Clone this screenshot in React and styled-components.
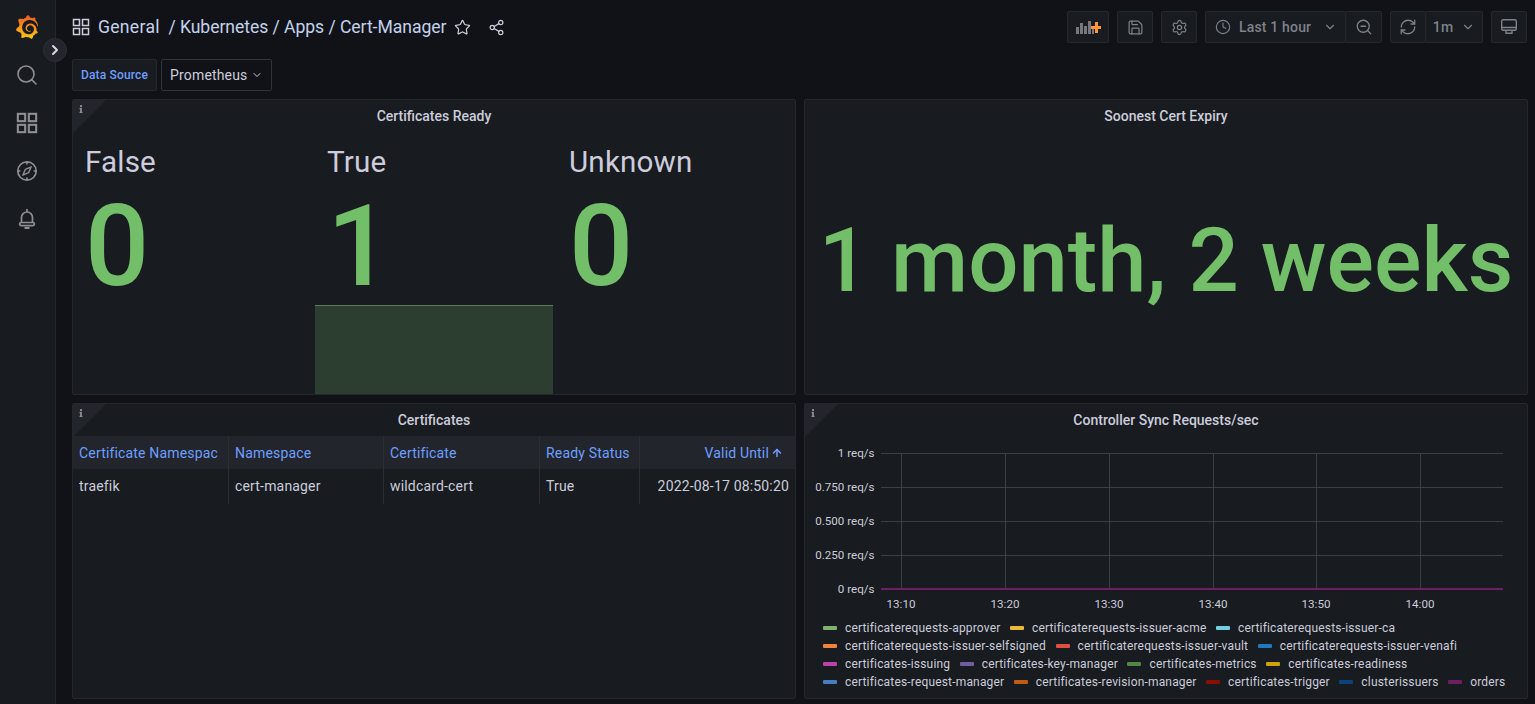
import React from 'react';
import styled, { createGlobalStyle } from 'styled-components';
import { Search, Star, Share2, Save, Settings, Clock, ZoomOut, RefreshCw, ChevronDown, ChevronRight, ArrowUp } from 'lucide-react';
import { SiGrafana } from 'react-icons/si';
import { FaInfo } from 'react-icons/fa';

const GlobalStyle = createGlobalStyle`
  html, body {
    margin: 0;
    height: 100%;
    overflow: hidden;
    background: #111217;
  }
  body {
    font-family: Roboto, "Liberation Sans", sans-serif;
    letter-spacing: 0.01071em;
    color: #ccccdc;
  }
  * {
    box-sizing: border-box;
  }
`;

const Page = styled.div`
  display: flex;
  position: relative;
  width: 1535px;
  height: 704px;
  overflow: hidden;
`;

const Sidebar = styled.nav`
  width: 56px;
  flex: none;
  background: #181b1f;
  border-right: 1px solid #25272c;
  display: flex;
  flex-direction: column;
  align-items: center;
  padding: 15px 1px 0 0;
  color: #8e8e96;
`;

const Logo = styled.div`
  height: 24px;
  margin-bottom: 12px;
  svg {
    fill: url(#grafanaGradient);
  }
`;

const SideItem = styled.div`
  height: 48px;
  display: flex;
  align-items: center;
  justify-content: center;
  width: 100%;
`;

const ExpandButton = styled.button`
  position: absolute;
  left: 43px;
  top: 38px;
  width: 24px;
  height: 24px;
  padding: 0;
  border-radius: 50%;
  border: 1px solid #2c2f35;
  background: #22252b;
  color: #d8d9e0;
  display: flex;
  align-items: center;
  justify-content: center;
`;

const Main = styled.main`
  flex: 1;
  min-width: 0;
  padding: 11px 7px 0 16px;
  display: flex;
  flex-direction: column;
`;

const TopBar = styled.header`
  display: flex;
  align-items: center;
  height: 32px;
  margin-bottom: 16px;
`;

const Breadcrumb = styled.div`
  display: flex;
  align-items: center;
  font-size: 17.6px;
  letter-spacing: -0.06px;
  color: #c3d3ec;
  white-space: pre;
  margin-left: 8px;
`;

const BreadcrumbHome = styled.span`
  letter-spacing: 0.28px;
`;

const PlainIcon = styled.span`
  display: flex;
  color: #ccccdc;
  margin-left: ${(p) => p.$gap || 0}px;
`;

const ToolGroup = styled.div`
  margin-left: auto;
  display: flex;
  gap: 8px;
  margin-right: 1px;
`;

const ToolButton = styled.div`
  height: 32px;
  min-width: ${(p) => p.$w || 36}px;
  display: flex;
  align-items: center;
  justify-content: ${(p) => (p.$pad ? 'flex-start' : 'center')};
  gap: 8px;
  background: #181b1f;
  border: 1px solid #25282d;
  border-radius: 2px;
  color: #7f818b;
  font-size: 14px;
  font-weight: 500;
  padding-left: ${(p) => p.$pad || 0}px;
`;

const TimeCaret = styled.span`
  display: flex;
  margin-left: 4px;
`;

const Joined = styled.div`
  display: flex;
  & > div + div {
    margin-left: -1px;
  }
`;

const VarRow = styled.div`
  display: flex;
  gap: 4px;
  height: 32px;
  margin-bottom: 8px;
`;

const VarLabel = styled.div`
  width: 85px;
  background: #181b1f;
  border: 1px solid #25282d;
  border-radius: 2px;
  color: #6e9fff;
  font-size: 12px;
  font-weight: 500;
  display: flex;
  align-items: center;
  justify-content: center;
`;

const VarSelect = styled.div`
  width: 111px;
  background: #111217;
  border: 1px solid #30333a;
  border-radius: 2px;
  color: #ccccdc;
  font-size: 14px;
  display: flex;
  align-items: center;
  padding-left: 8px;
  gap: 3px;
`;

const PanelGrid = styled.div`
  display: grid;
  grid-template-columns: 724px 724px;
  grid-template-rows: 296px 296px;
  gap: 8px;
`;

const Panel = styled.section`
  position: relative;
  background: #181b1f;
  border: 1px solid #24272c;
  border-radius: 2px;
  display: flex;
  flex-direction: column;
  overflow: hidden;
`;

const Corner = styled.div`
  position: absolute;
  left: 0;
  top: 0;
  width: 0;
  height: 0;
  border-top: 33px solid #22252b;
  border-right: 33px solid transparent;
`;

const CornerIcon = styled.span`
  position: absolute;
  left: 4px;
  top: 5px;
  display: flex;
  color: #8e8e96;
`;

const PanelTitle = styled.h2`
  margin: 0;
  height: 32px;
  flex: none;
  font-size: 14px;
  font-weight: 500;
  letter-spacing: 0;
  line-height: 32px;
  text-align: center;
  color: #ccccdc;
`;

const StatRow = styled.div`
  flex: 1;
  display: flex;
  gap: 4px;
  min-height: 0;
`;

const StatItem = styled.div`
  position: relative;
  flex: 1;
  padding: 12px 12px 0;
  display: flex;
  flex-direction: column;
`;

const StatName = styled.div`
  font-size: 29.6px;
  line-height: 36px;
  color: #ccccdc;
`;

const StatValue = styled.div`
  margin-top: 2px;
  font-size: 113px;
  font-weight: 500;
  letter-spacing: 0;
  line-height: 130px;
  color: #73bf69;
`;

const Spark = styled.div`
  position: absolute;
  left: 0;
  right: 0;
  bottom: 0;
  height: 89px;
  background: #2c3e2f;
  border-top: 1px solid #5d7a58;
`;

const BigValue = styled.div`
  flex: 1;
  display: flex;
  justify-content: center;
  padding-top: 49px;
  font-size: 88.6px;
  font-weight: 500;
  letter-spacing: 0;
  line-height: 160px;
  color: #73bf69;
  white-space: nowrap;
`;

const TableGrid = styled.div`
  display: grid;
  grid-template-columns: 156px 155px 156px 100px 1fr;
`;

const Cell = styled.div`
  height: ${(p) => (p.$head ? 33 : 35)}px;
  padding: 0 ${(p) => (p.$head && p.$right ? 12 : 6)}px ${(p) => (p.$head ? 0 : 2)}px 6px;
  display: flex;
  align-items: center;
  justify-content: ${(p) => (p.$right ? 'flex-end' : 'flex-start')};
  gap: 2px;
  font-size: 14px;
  white-space: nowrap;
  overflow: hidden;
  color: ${(p) => (p.$head ? '#6e9fff' : '#ccccdc')};
  background: ${(p) => (p.$head ? '#22252b' : 'transparent')};
  border-right: ${(p) => (p.$last ? 'none' : '1px solid #2b2e33')};
`;

const ChartWrap = styled.div`
  flex: 1;
  min-height: 0;
`;

const AxisText = styled.text`
  font-family: Roboto, sans-serif;
  font-size: 11.6px;
  letter-spacing: 0;
  fill: #ccccdc;
`;

const Legend = styled.div`
  display: flex;
  flex-wrap: wrap;
  padding: 0 18px 7px;
  column-gap: 9.5px;
`;

const LegendItem = styled.div`
  display: flex;
  align-items: center;
  height: 18px;
  font-size: 12px;
  color: #ccccdc;
  white-space: nowrap;
`;

const Swatch = styled.i`
  width: 14px;
  height: 4px;
  border-radius: 1px;
  margin-right: 8px;
  background: ${(p) => p.$color};
`;

const legend = [
  ['certificaterequests-approver', '#7eb26d'],
  ['certificaterequests-issuer-acme', '#eab839'],
  ['certificaterequests-issuer-ca', '#6ed0e0'],
  ['certificaterequests-issuer-selfsigned', '#ef843c'],
  ['certificaterequests-issuer-vault', '#e24d42'],
  ['certificaterequests-issuer-venafi', '#1f78c1'],
  ['certificates-issuing', '#ba43a9'],
  ['certificates-key-manager', '#705da0'],
  ['certificates-metrics', '#508642'],
  ['certificates-readiness', '#cca300'],
  ['certificates-request-manager', '#447ebc'],
  ['certificates-revision-manager', '#c15c17'],
  ['certificates-trigger', '#890f02'],
  ['clusterissuers', '#0a437c'],
  ['orders', '#6d1f62'],
];

const gridX = [96, 200, 304, 408, 511, 615];

const AppsIcon = ({ size = 18, weight = 1.5 }) => (
  <svg width={size} height={size} viewBox="0 0 18 18" fill="none" stroke="currentColor" strokeWidth={weight}>
    <rect x="1.5" y="1.5" width="6" height="6" />
    <rect x="10.5" y="1.5" width="6" height="6" />
    <rect x="1.5" y="10.5" width="6" height="6" />
    <rect x="10.5" y="10.5" width="6" height="6" />
  </svg>
);

const CompassIcon = () => (
  <svg width="22" height="22" viewBox="0 0 22 22" fill="none" stroke="currentColor" strokeWidth="1.7">
    <circle cx="11" cy="11" r="9.2" />
    <path d="M11 1.8v2.6M11 17.6v2.6M1.8 11h2.6M17.6 11h2.6" />
    <path d="M15.2 6.8l-2.6 5.8-5.8 2.6 2.6-5.8z" strokeWidth="1.4" strokeLinejoin="round" />
  </svg>
);

const BellIcon = () => (
  <svg width="20" height="22" viewBox="0 0 20 22" fill="none" stroke="currentColor" strokeWidth="1.7">
    <path d="M10 1v2.6M4.5 14.5V9.5a5.5 5.5 0 0 1 11 0v5" />
    <rect x="2.6" y="14.5" width="14.8" height="3.2" rx="1.6" />
    <path d="M7.5 20h5" strokeWidth="2" />
  </svg>
);

const AddPanelIcon = () => (
  <svg width="26" height="18" viewBox="0 0 26 18">
    <g fill="#77777f">
      <rect x="1" y="9" width="3" height="7" />
      <rect x="5" y="5" width="3" height="11" />
      <rect x="9" y="8" width="3" height="8" />
      <rect x="13" y="3" width="3" height="13" />
      <rect x="17" y="11" width="2" height="5" />
    </g>
    <path d="M20 4v4h-4v3h4v4h3v-4h3V8h-3V4z" fill="#ff9830" />
  </svg>
);

const TvIcon = () => (
  <svg width="18" height="18" viewBox="0 0 18 18" fill="none" stroke="currentColor" strokeWidth="1.4">
    <rect x="1.7" y="1.7" width="14.6" height="10.6" rx="1.5" />
    <path d="M2 9.5h14M6 12.5v2.8h6v-2.8" />
  </svg>
);

const App = () => (
  <Page>
    <GlobalStyle />
    <svg width="0" height="0" style={{ position: 'absolute' }}>
      <defs>
        <linearGradient id="grafanaGradient" x1="0" y1="0" x2="0" y2="1">
          <stop offset="0" stopColor="#f05a28" />
          <stop offset="1" stopColor="#fbca0a" />
        </linearGradient>
      </defs>
    </svg>
    <Sidebar>
      <Logo>
        <SiGrafana size={24} />
      </Logo>
      <SideItem>
        <Search size={24} strokeWidth={1.6} />
      </SideItem>
      <SideItem>
        <AppsIcon size={22} weight={1.7} />
      </SideItem>
      <SideItem>
        <CompassIcon />
      </SideItem>
      <SideItem>
        <BellIcon />
      </SideItem>
    </Sidebar>
    <ExpandButton>
      <ChevronRight size={16} strokeWidth={3} />
    </ExpandButton>
    <Main>
      <TopBar>
        <PlainIcon>
          <AppsIcon size={18} />
        </PlainIcon>
        <Breadcrumb>
          <BreadcrumbHome>General</BreadcrumbHome>  / Kubernetes / Apps / Cert-Manager
        </Breadcrumb>
        <PlainIcon $gap={8}>
          <Star size={17} strokeWidth={1.7} />
        </PlainIcon>
        <PlainIcon $gap={17}>
          <Share2 size={17} strokeWidth={1.7} />
        </PlainIcon>
        <ToolGroup>
          <ToolButton $w={42}>
            <AddPanelIcon />
          </ToolButton>
          <ToolButton>
            <Save size={17} strokeWidth={1.7} />
          </ToolButton>
          <ToolButton>
            <Settings size={17} strokeWidth={1.7} />
          </ToolButton>
          <Joined>
            <ToolButton $w={141} $pad={9}>
              <Clock size={16} strokeWidth={1.7} />
              Last 1 hour
              <TimeCaret>
                <ChevronDown size={14} />
              </TimeCaret>
            </ToolButton>
            <ToolButton $w={37}>
              <ZoomOut size={18} strokeWidth={1.7} />
            </ToolButton>
          </Joined>
          <Joined>
            <ToolButton>
              <RefreshCw size={18} strokeWidth={1.7} />
            </ToolButton>
            <ToolButton $w={58}>
              1m
              <ChevronDown size={14} />
            </ToolButton>
          </Joined>
          <ToolButton>
            <TvIcon />
          </ToolButton>
        </ToolGroup>
      </TopBar>
      <VarRow>
        <VarLabel>Data Source</VarLabel>
        <VarSelect>
          Prometheus
          <ChevronDown size={12} />
        </VarSelect>
      </VarRow>
      <PanelGrid>
        <Panel>
          <Corner />
          <CornerIcon>
            <FaInfo size={8} />
          </CornerIcon>
          <PanelTitle>Certificates Ready</PanelTitle>
          <StatRow>
            <StatItem>
              <StatName>False</StatName>
              <StatValue>0</StatValue>
            </StatItem>
            <StatItem>
              <StatName>True</StatName>
              <StatValue>1</StatValue>
              <Spark />
            </StatItem>
            <StatItem>
              <StatName>Unknown</StatName>
              <StatValue>0</StatValue>
            </StatItem>
          </StatRow>
        </Panel>
        <Panel>
          <PanelTitle>Soonest Cert Expiry</PanelTitle>
          <BigValue>1 month, 2 weeks</BigValue>
        </Panel>
        <Panel>
          <Corner />
          <CornerIcon>
            <FaInfo size={8} />
          </CornerIcon>
          <PanelTitle>Certificates</PanelTitle>
          <TableGrid>
            <Cell $head>Certificate Namespac</Cell>
            <Cell $head>Namespace</Cell>
            <Cell $head>Certificate</Cell>
            <Cell $head>Ready Status</Cell>
            <Cell $head $right $last>
              Valid Until
              <ArrowUp size={12} strokeWidth={3} />
            </Cell>
            <Cell>traefik</Cell>
            <Cell>cert-manager</Cell>
            <Cell>wildcard-cert</Cell>
            <Cell>True</Cell>
            <Cell $right $last>2022-08-17 08:50:20</Cell>
          </TableGrid>
        </Panel>
        <Panel>
          <Corner />
          <CornerIcon>
            <FaInfo size={8} />
          </CornerIcon>
          <PanelTitle>Controller Sync Requests/sec</PanelTitle>
          <ChartWrap>
            <svg width="722" height="184" viewBox="0 0 722 184">
              {[0, 34, 68, 102].map((y) => (
                <line key={y} x1="76" x2="698" y1={y + 17.5} y2={y + 17.5} stroke="#3c3e43" />
              ))}
              {gridX.map((x) => (
                <line key={x} x1={x + 0.5} x2={x + 0.5} y1="17" y2="153" stroke="#3c3e43" />
              ))}
              <line x1="76" x2="698" y1="153" y2="153" stroke="#6d1f62" strokeWidth="2" />
              {['1 req/s', '0.750 req/s', '0.500 req/s', '0.250 req/s', '0 req/s'].map((t, i) => (
                <AxisText key={t} x="69.5" y={21 + i * 34} textAnchor="end">{t}</AxisText>
              ))}
              {['13:10', '13:20', '13:30', '13:40', '13:50', '14:00'].map((t, i) => (
                <AxisText key={t} x={gridX[i]} y="172" textAnchor="middle">{t}</AxisText>
              ))}
            </svg>
          </ChartWrap>
          <Legend>
            {legend.map(([name, color]) => (
              <LegendItem key={name}>
                <Swatch $color={color} />
                {name}
              </LegendItem>
            ))}
          </Legend>
        </Panel>
      </PanelGrid>
    </Main>
  </Page>
);

export default App;
